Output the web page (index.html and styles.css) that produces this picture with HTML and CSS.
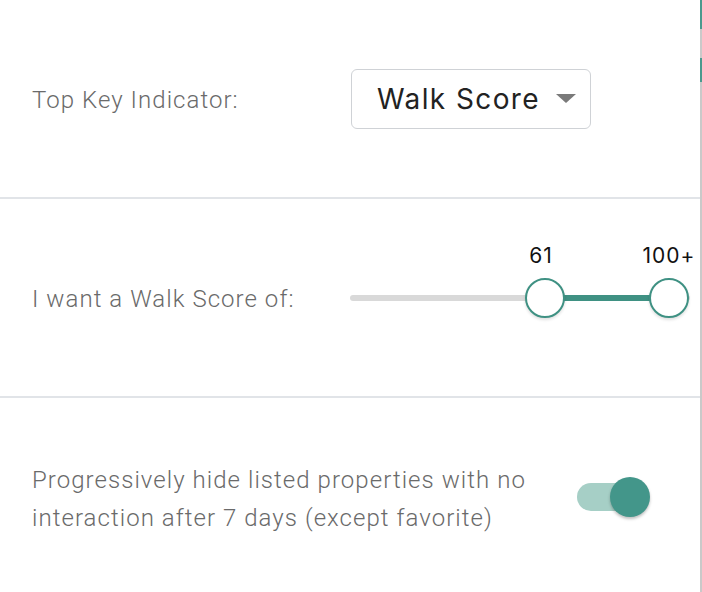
FILE: index.html
```html
<!DOCTYPE html>
<html>
<head>
<meta charset="utf-8">
<link rel="stylesheet" href="styles.css">
</head>
<body>
<div class="page">
  <div class="panel">
    <div class="row">
      <div class="label">Top Key Indicator:</div>
      <div class="select">
        <span class="select-text">Walk Score</span>
        <span class="caret"></span>
      </div>
    </div>
    <div class="row">
      <div class="label">I want a Walk Score of:</div>
      <div class="slider">
        <div class="track">
          <div class="range"></div>
        </div>
        <div class="handle handle-min"><span class="value">61</span></div>
        <div class="handle handle-max"><span class="value">100+</span></div>
      </div>
    </div>
    <div class="row row-last">
      <div class="label label-wide">Progressively hide listed properties with no interaction after 7 days (except favorite)</div>
      <div class="toggle">
        <div class="toggle-track"></div>
        <div class="toggle-knob"></div>
      </div>
    </div>
  </div>
  <div class="edge"></div>
</div>
</body>
</html>
```

FILE: styles.css
```css
html, body {
  margin: 0;
  padding: 0;
  background: #ffffff;
}
body {
  font-family: Inter, "Liberation Sans", sans-serif;
  width: 702px;
  height: 592px;
  overflow: hidden;
}
.page {
  display: flex;
  height: 592px;
}
.panel {
  width: 700px;
  display: flex;
  flex-direction: column;
}
.edge {
  width: 2px;
  background: linear-gradient(to bottom,
    #4a9a8e 0, #4a9a8e 29px,
    #c9c9c9 29px, #c9c9c9 58px,
    #4a9a8e 58px, #4a9a8e 82px,
    #c9c9c9 82px, #c9c9c9 100%);
}
.row {
  height: 197px;
  flex: none;
  display: flex;
  align-items: center;
  padding-left: 32px;
  border-bottom: 2px solid #e1e4e8;
  box-sizing: content-box;
}
.row-last {
  border-bottom: none;
}
.label {
  width: 319px;
  flex: none;
  font-family: Roboto, "Liberation Sans", sans-serif;
  font-size: 24px;
  font-weight: 300;
  letter-spacing: 1.05px;
  color: #6a6a6a;
  padding-top: 2px;
}
.label-wide {
  width: 510px;
  line-height: 38px;
  padding-top: 5px;
}
.select {
  width: 240px;
  height: 60px;
  box-sizing: border-box;
  border: 1.5px solid #cfd2d6;
  border-radius: 6px;
  display: flex;
  align-items: center;
  padding-left: 25px;
  gap: 16px;
}
.select-text {
  font-size: 28px;
  color: #222;
  font-weight: 400;
  letter-spacing: 1.4px;
}
.caret {
  width: 0;
  height: 0;
  border-left: 10px solid transparent;
  border-right: 10px solid transparent;
  border-top: 9px solid #7a7a7a;
}
.slider {
  position: relative;
  width: 340px;
  height: 44px;
  margin-left: -1px;
}
.track {
  position: absolute;
  left: 0;
  right: 0;
  top: 19px;
  height: 6px;
  border-radius: 3px;
  background: #d9d9d9;
}
.range {
  position: absolute;
  left: 195px;
  width: 124px;
  top: 0;
  bottom: 0;
  background: #3f9183;
}
.handle {
  position: absolute;
  top: 2px;
  width: 40px;
  height: 40px;
  box-sizing: border-box;
  border: 2px solid #3f9183;
  border-radius: 50%;
  background: #fff;
  box-shadow: 0 2px 3px rgba(0,0,0,0.12);
}
.handle-min { left: 175px; }
.handle-max { left: 299px; }
.value {
  position: absolute;
  bottom: 48px;
  left: 50%;
  transform: translateX(-50%);
  font-size: 21px;
  letter-spacing: 1px;
  color: #111;
  white-space: nowrap;
}
.handle-min .value { margin-left: -4px; }
.handle-max .value { margin-left: 0; }
.toggle {
  position: relative;
  width: 76px;
  height: 40px;
  margin-left: 35px;
}
.toggle-track {
  position: absolute;
  left: 0;
  top: 6px;
  width: 56px;
  height: 28px;
  border-radius: 14px;
  background: #a6cfc6;
}
.toggle-knob {
  position: absolute;
  left: 33px;
  top: 0;
  width: 40px;
  height: 40px;
  border-radius: 50%;
  background: #43968a;
  box-shadow: 0 2px 3px rgba(0,0,0,0.25);
}
```
